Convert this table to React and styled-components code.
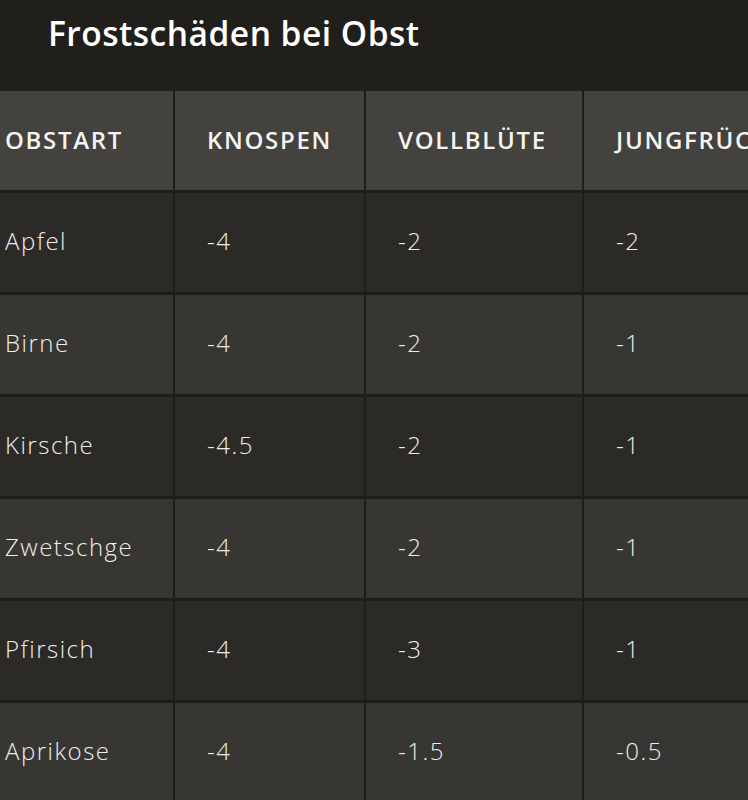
import React from "react";
import styled, { createGlobalStyle } from "styled-components";

const Global = createGlobalStyle`
  html, body { margin: 0; padding: 0; background: #201f1c; }
  body { font-family: "Open Sans", "Noto Sans", sans-serif; color: #f2f2f0; }
`;

const Page = styled.div`
  width: 748px;
  height: 800px;
  overflow: hidden;
  background: #201f1c;
`;

const Title = styled.h1`
  margin: 0;
  height: 91px;
  box-sizing: border-box;
  padding: 9px 0 0 48px;
  font-size: 33.5px;
  line-height: 48px;
  font-weight: 600;
  color: #ffffff;
  letter-spacing: 0.5px;
`;

const Grid = styled.div`
  display: grid;
  grid-template-columns: 200px 189px 216px 260px;
  grid-auto-rows: 99px;
  column-gap: 2px;
  row-gap: 3px;
  margin-left: -27px;
  width: max-content;
  background: #1e1d1a;
`;

const HeadCell = styled.div`
  display: flex;
  align-items: center;
  padding: 0 0 2px 32px;
  background: #44423e;
  font-size: 24px;
  font-weight: 600;
  letter-spacing: 1.7px;
  text-transform: uppercase;
  color: #f4f4f2;
  white-space: nowrap;
  overflow: hidden;
`;

const Cell = styled.div`
  display: flex;
  align-items: center;
  padding: 0 0 5px 32px;
  background: ${(p) => (p.$alt ? "#383632" : "#2c2a27")};
  font-size: 24px;
  font-weight: 300;
  letter-spacing: 1.5px;
  color: #efeeeb;
  white-space: nowrap;
`;

const headers = ["Obstart", "Knospen", "Vollblüte", "Jungfrüchte"];
const rows = [
  ["Apfel", "-4", "-2", "-2"],
  ["Birne", "-4", "-2", "-1"],
  ["Kirsche", "-4.5", "-2", "-1"],
  ["Zwetschge", "-4", "-2", "-1"],
  ["Pfirsich", "-4", "-3", "-1"],
  ["Aprikose", "-4", "-1.5", "-0.5"],
];

export default function App() {
  return (
    <Page>
      <Global />
      <Title>Frostschäden bei Obst</Title>
      <Grid>
        {headers.map((h) => (
          <HeadCell key={h}>{h}</HeadCell>
        ))}
        {rows.map((r, i) =>
          r.map((v, j) => (
            <Cell key={i + "-" + j} $alt={i % 2 === 1}>
              {v}
            </Cell>
          ))
        )}
      </Grid>
    </Page>
  );
}
